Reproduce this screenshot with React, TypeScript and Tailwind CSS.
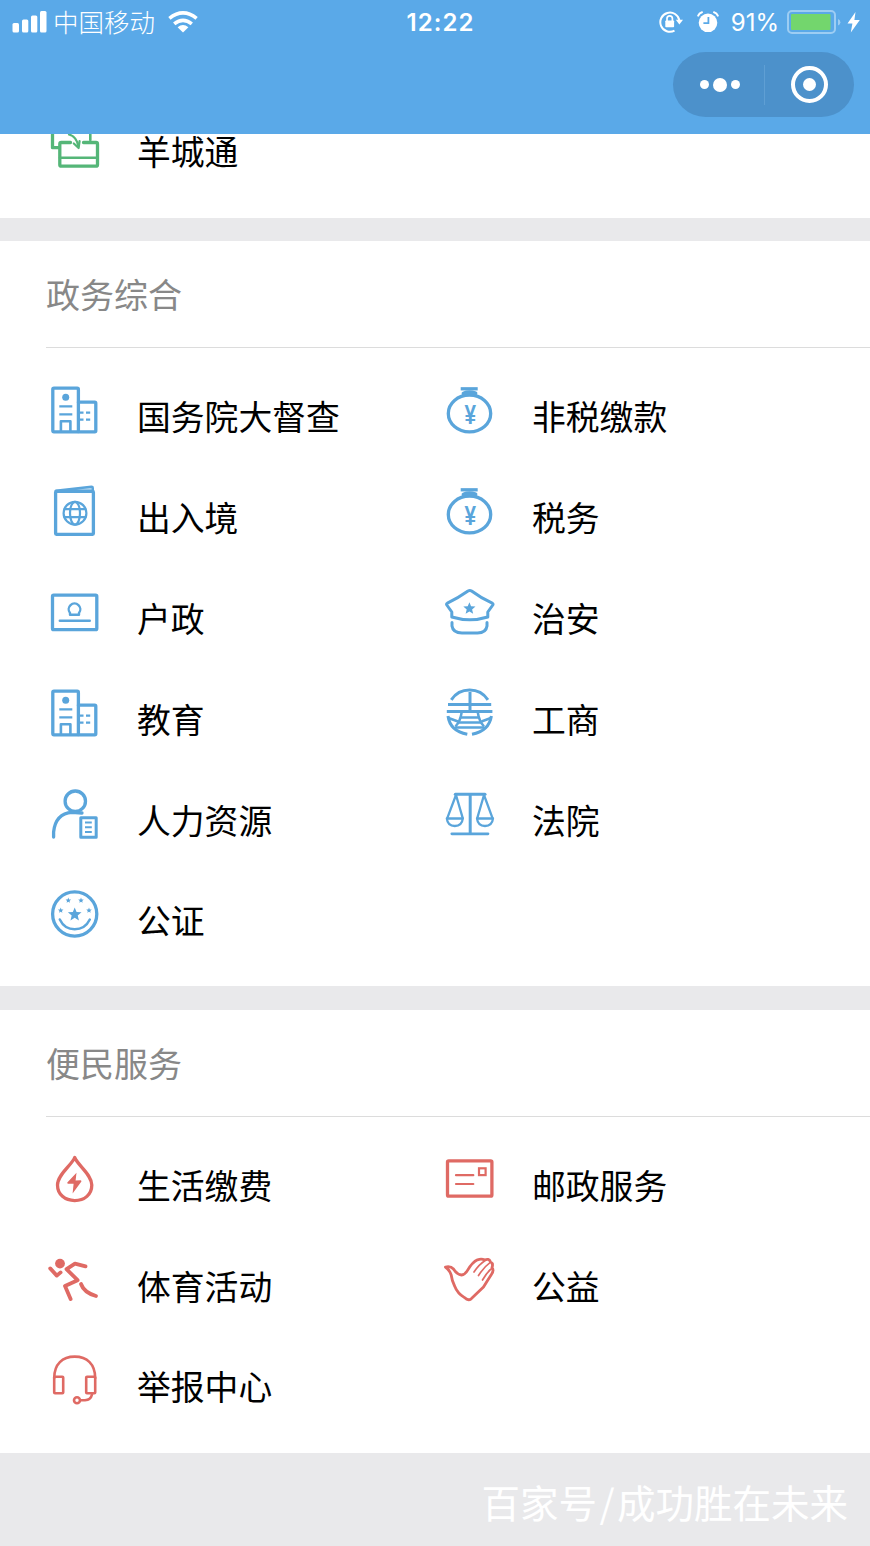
import type { ReactNode } from "react";

const STAR =
  "M0 -1 L0.26 -0.36 L0.95 -0.31 L0.42 0.14 L0.59 0.81 L0 0.44 L-0.59 0.81 L-0.42 0.14 L-0.95 -0.31 L-0.26 -0.36 Z";

function Star(props: { x: number; y: number; r: number }) {
  return (
    <path
      d={STAR}
      transform={`translate(${props.x} ${props.y}) scale(${props.r})`}
      fill="currentColor"
      stroke="none"
    />
  );
}

function Icon(props: { children: ReactNode }) {
  return (
    <svg
      viewBox="0 0 54 54"
      width={54}
      height={54}
      fill="none"
      stroke="currentColor"
      strokeWidth={3.3}
      strokeLinecap="round"
      strokeLinejoin="round"
      className="shrink-0"
    >
      {props.children}
    </svg>
  );
}

const CardIcon = () => (
  <Icon>
    <path d="M5.5 14 V28.7 H12.3" />
    <path d="M23.5 23.5 H14.3 Q12.8 23.5 12.8 25 V45.7 Q12.8 47.2 14.3 47.2 H49 Q50.5 47.2 50.5 45.7 V25 Q50.5 23.5 49 23.5 H36.5" />
    <path d="M13 38.7 H50" strokeWidth={2.6} />
    <path d="M43.3 14 V21" strokeWidth={2.6} />
    <path d="M22 15.5 Q29.5 17.5 31.3 27" strokeWidth={2.2} />
    <path d="M26.8 24.5 L31.6 29 L32.6 22" strokeWidth={2.2} />
  </Icon>
);

const BuildingIcon = () => (
  <Icon>
    <rect x={5.8} y={4.2} width={25.6} height={43.6} rx={1.2} />
    <path d="M31.4 18.2 H47.8 Q48.8 18.2 48.8 19.2 V46.8 Q48.8 47.8 47.8 47.8 H31.4" />
    <circle cx={18.7} cy={13.3} r={3.5} fill="currentColor" stroke="none" />
    <g strokeWidth={2.2} strokeLinecap="butt">
      <path d="M12.3 22.3 H25.3 M12.3 30.3 H25.3" />
      <path d="M13.9 47 V37.2 H23.4 V47" strokeWidth={2.6} />
      <path d="M33 28.7 H36.5 M39 28.7 H43.2 M33 35.7 H36.5 M39 35.7 H43.2" />
    </g>
  </Icon>
);

const PassportIcon = () => (
  <Icon>
    <rect x={8.6} y={6.4} width={37.8} height={43} rx={0.8} />
    <path
      d="M9 5.8 L44.5 1.8 Q45.8 1.8 45.8 3 V6 Z"
      strokeWidth={2.4}
      fill="currentColor"
      fillOpacity={0.35}
    />
    <g strokeWidth={2.2}>
      <circle cx={28} cy={28.2} r={11.4} />
      <ellipse cx={28} cy={28.2} rx={5} ry={11.4} />
      <path d="M17.5 24.2 H38.5 M17.5 32.2 H38.5" />
    </g>
  </Icon>
);

const MoneyBagIcon = () => (
  <Icon>
    <ellipse cx={27.5} cy={29.4} rx={21.2} ry={18.4} />
    <path d="M18.7 4.8 H35.7" strokeLinecap="butt" />
    <path d="M21.5 9.4 Q27.2 7 33.5 9.4" strokeWidth={3.8} />
    <text
      transform="translate(28.3 40.4) scale(0.74 1)"
      textAnchor="middle"
      fontSize={28}
      fontWeight={700}
      fontFamily="'Liberation Sans', sans-serif"
      fill="currentColor"
      stroke="none"
    >
      ¥
    </text>
  </Icon>
);

const IdCardIcon = () => (
  <Icon>
    <rect x={5.5} y={9.2} width={44.3} height={34.4} rx={1.2} />
    <path d="M12.8 34.8 H42.8" strokeWidth={2.4} />
    <path
      d="M23 28.8 H32 V27 A5.8 5.8 0 1 0 23 27 Z"
      strokeWidth={2.4}
    />
  </Icon>
);

const PoliceCapIcon = () => (
  <Icon>
    <path
      d="M26 5 Q27.8 4 29.6 5 Q39 12 50.2 17.2 Q51.4 18 50.8 19 L45.8 26 V31 Q28 36.5 9.8 31 V26 L4.8 19 Q4.2 18 5.4 17.2 Q16 12 26 5 Z"
      strokeWidth={3}
    />
    <Star x={27.4} y={22.6} r={6.4} />
    <path d="M10 36.5 V40 Q11 47 20 47 H35.5 Q44 47 45 40 V36.5" strokeWidth={3} />
  </Icon>
);

const CommerceIcon = () => (
  <Icon>
    <g strokeWidth={3} strokeLinecap="butt">
      <path d="M9.3 12.8 A22 22 0 0 1 45.9 12.8" />
      <path d="M28 5 V24" />
      <path d="M6 17.4 H49.2 M4.8 24.6 H50.4" />
      <path d="M6 29 Q8 44 25.3 47.3" />
      <path d="M49.4 29 Q47 44 30 47.3" />
      <g strokeWidth={2.5}>
        <path d="M19.7 25 Q18.5 34 13.5 39.5 M35.7 25 Q37 34 42 39.5" />
        <path d="M19 30.5 H37 M6.5 31 L16 34.5 M48.8 31 L39.5 34.5" />
        <path d="M16.5 35.6 H39 M13 40.4 H42.5" />
      </g>
    </g>
  </Icon>
);

const ScalesIcon = () => (
  <Icon>
    <path d="M13.3 6.2 H43" strokeWidth={3} />
    <path d="M28.2 6.2 V45" strokeLinecap="butt" strokeWidth={3} />
    <path d="M9.8 45.8 H46" strokeWidth={2.7} />
    <g strokeWidth={2.3}>
      <path d="M14 7 L5.2 30.4 M14 7 L20.8 30.4" />
      <path d="M4.8 30.5 H20.8 Q20 38 12.8 38 Q5.6 38 4.8 30.5 Z" />
      <path d="M42 7 L35.2 30.4 M42 7 L50.6 30.4" />
      <path d="M35 30.5 H51 Q50.2 38 43 38 Q35.8 38 35 30.5 Z" />
    </g>
  </Icon>
);

const StaffIcon = () => (
  <Icon>
    <circle cx={28.3} cy={13.2} r={10.2} />
    <path d="M6.6 49 V44 Q8.5 25.5 25 24.3 L35 25" />
    <rect x={33.8} y={29.8} width={15.4} height={19.4} strokeWidth={3} />
    <path
      d="M38 34.6 H44.8 M38 39.3 H44.8 M38 44 H44.8"
      strokeWidth={2}
      strokeLinecap="butt"
    />
  </Icon>
);

const NotaryIcon = () => (
  <Icon>
    <circle cx={27.7} cy={26} r={22.1} />
    <Star x={27.7} y={26.6} r={7.2} />
    <Star x={21.3} y={12.5} r={2.9} />
    <Star x={34} y={12.5} r={2.9} />
    <Star x={13.7} y={22.5} r={2.9} />
    <Star x={42} y={22.5} r={2.9} />
    <path d="M12.8 31.5 Q17.5 41.3 27.7 41.3 Q38 41.3 42.8 31.5" strokeWidth={2.5} />
  </Icon>
);

const UtilityIcon = () => (
  <Icon>
    <path d="M27.7 4.5 C31 12.5 44.8 21.5 44.8 32 C44.8 41.5 37.5 47.6 27.7 47.6 C18 47.6 10.5 41.5 10.5 32 C10.5 21.5 24.5 12.5 27.7 4.5 Z" />
    <path
      d="M29.5 19.8 L20.3 29.6 Q20 30.6 21 30.8 L26.6 30.8 L25.6 40.5 L34.4 28.4 Q34.6 27.4 33.6 27.2 L28.6 27.4 Z"
      fill="currentColor"
      stroke="none"
    />
  </Icon>
);

const MailIcon = () => (
  <Icon>
    <rect x={5.5} y={7.8} width={44.4} height={35.4} rx={1.2} />
    <path d="M14 22.2 H31.3 M14 31 H31.3" strokeWidth={2.2} />
    <rect x={37} y={15.3} width={6.6} height={6.8} strokeWidth={2.2} strokeLinejoin="miter" />
  </Icon>
);

const RunnerIcon = () => (
  <Icon>
    <circle cx={13} cy={9.6} r={4.9} fill="currentColor" stroke="none" />
    <g strokeWidth={3.8}>
      <path d="M3.2 14.4 L9.8 21.6 L13.6 18.4" />
      <path d="M38.5 12.4 L28 9.6 L19.5 15.2 L30.6 26.2 L18 32 L23.6 45" />
      <path d="M34 30 Q37 38.5 49 42" />
    </g>
  </Icon>
);

const HandIcon = () => (
  <Icon>
    <path
      d="M3.4 13 Q8.5 11.6 11.5 15 Q15 20.6 19.5 21 Q23 20.8 25.5 16.4 Q30.5 8 35.5 5.8 Q40 4.4 42.5 6.2 Q47 4 48.3 7.6 Q51.6 9.5 50 13.5 Q52.3 16.5 49.4 20.5 Q45.5 26.5 41.5 33 L29.2 44.8 Q26 47.2 22.5 43.6 Q15.5 39.5 12.6 32 Q10 27 9.2 21 Q7.5 16 3.4 13 Z"
      strokeWidth={2.8}
    />
    <path
      d="M42.5 7 Q37 10.5 32 18 M48.3 8.4 Q42 13 36.5 21.5 M49.8 14.5 Q45 18 40.5 26"
      strokeWidth={1.7}
    />
  </Icon>
);

const HeadsetIcon = () => (
  <Icon>
    <g strokeWidth={2.6}>
      <path d="M7.2 24 C7.2 10 15.5 2.6 27.7 2.6 C40 2.6 48.2 10 48.2 24" />
      <rect x={7.2} y={22.8} width={9} height={16.4} rx={0.8} />
      <rect x={39.2} y={22.8} width={9} height={16.4} rx={0.8} />
      <circle cx={30} cy={46.3} r={3} />
      <path d="M33.4 46.3 H38 Q43.8 45.8 45 40.5" />
    </g>
  </Icon>
);

type Service = { name: string; icon: () => ReactNode };

const government: Service[] = [
  { name: "国务院大督查", icon: BuildingIcon },
  { name: "非税缴款", icon: MoneyBagIcon },
  { name: "出入境", icon: PassportIcon },
  { name: "税务", icon: MoneyBagIcon },
  { name: "户政", icon: IdCardIcon },
  { name: "治安", icon: PoliceCapIcon },
  { name: "教育", icon: BuildingIcon },
  { name: "工商", icon: CommerceIcon },
  { name: "人力资源", icon: StaffIcon },
  { name: "法院", icon: ScalesIcon },
  { name: "公证", icon: NotaryIcon },
];

const convenience: Service[] = [
  { name: "生活缴费", icon: UtilityIcon },
  { name: "邮政服务", icon: MailIcon },
  { name: "体育活动", icon: RunnerIcon },
  { name: "公益", icon: HandIcon },
  { name: "举报中心", icon: HeadsetIcon },
];

function ServiceItem(props: { service: Service }) {
  const ServiceIcon = props.service.icon;
  return (
    <div className="flex h-[54px] items-start gap-9">
      <ServiceIcon />
      <span className="mt-[15px] text-[33.8px] leading-[34px] whitespace-nowrap text-black">
        {props.service.name}
      </span>
    </div>
  );
}

type SectionProps = {
  title: string;
  services: Service[];
  iconColor: string;
};

function Section(props: SectionProps) {
  return (
    <section className="bg-white pb-11 last:pb-[44.6px]">
      <h2 className="ml-[46px] h-[107px] border-b border-[#dcdcdc] text-[34px] leading-[105px] text-[#888888]">
        {props.title}
      </h2>
      <div
        className={`grid grid-cols-[395px_1fr] gap-y-[46.8px] pt-9 pl-[47px] ${props.iconColor}`}
      >
        {props.services.map((service) => (
          <ServiceItem key={service.name} service={service} />
        ))}
      </div>
    </section>
  );
}

function StatusBar() {
  return (
    <div className="grid h-[44px] grid-cols-[1fr_auto_1fr] items-center pr-[7px] pl-3 text-white">
      <div className="flex items-center">
        <svg width={35} height={22} viewBox="0 0 35 22" fill="currentColor">
          <rect x={0.5} y={12} width={6.5} height={9.5} rx={1.5} />
          <rect x={10} y={8.5} width={6.3} height={13} rx={1.5} />
          <rect x={19} y={4.5} width={6.3} height={17} rx={1.5} />
          <rect x={28} y={0} width={6.5} height={21.5} rx={1.5} />
        </svg>
        <span className="mb-0.5 ml-1.5 text-[25.5px] leading-[42px] font-light">中国移动</span>
        <svg width={30} height={22} viewBox="0 0 30 22" className="ml-[13px]">
          <g fill="none" stroke="currentColor" strokeWidth={3.6}>
            <path d="M1.4 7.4 Q15 -3.6 28.6 7.4" />
            <path d="M6.2 12.8 Q15 5.8 23.8 12.8" />
          </g>
          <path d="M9.6 16.2 Q15 11.6 20.4 16.2 L15 21.4 Z" fill="currentColor" />
        </svg>
      </div>
      <span className="pt-0.5 pl-1.5 font-[Inter] text-[24px] leading-[42px] font-semibold tracking-[1.1px]">
        12:22
      </span>
      <div className="flex items-center justify-end">
        <svg width={24} height={22} viewBox="0 0 24 22">
          <g fill="none" stroke="currentColor" strokeWidth={2}>
            <path d="M15.5 19.6 A9.6 9.6 0 1 1 20.4 9.5" />
            <path d="M8 10 V7.6 A2.7 2.7 0 0 1 13.4 7.6 V10" strokeWidth={1.7} />
          </g>
          <rect x={6.3} y={9.4} width={8.8} height={6.8} rx={0.8} fill="currentColor" />
          <path d="M16.8 8.8 H24 L20.4 13.6 Z" fill="currentColor" />
        </svg>
        <svg width={22} height={22} viewBox="0 0 22 22" className="ml-3.5">
          <circle cx={11} cy={11.8} r={9.3} fill="currentColor" />
          <path
            d="M1.2 4.6 Q2.2 2 5 1.2 M20.8 4.6 Q19.8 2 17 1.2"
            fill="none"
            stroke="currentColor"
            strokeWidth={2}
            strokeLinecap="round"
          />
          <path d="M11.4 6 V12.2 H6.4" fill="none" stroke="#5aa9e8" strokeWidth={1.8} />
        </svg>
        <span className="ml-3 pt-0.5 font-[Inter] text-[24px] leading-[42px]">91%</span>
        <svg width={76} height={24} viewBox="0 0 76 24" className="ml-2">
          <rect
            x={1}
            y={1}
            width={47}
            height={22}
            rx={4}
            fill="none"
            stroke="#9dcdf3"
            strokeWidth={2}
          />
          <rect x={4} y={4} width={39.5} height={16} rx={1} fill="#73d66d" />
          <path d="M51 9 Q53.4 10 53.4 12.2 Q53.4 14.4 51 15.4 Z" fill="#9dcdf3" />
          <path d="M68.5 2 L60.5 13.5 H65.4 L63.8 22.5 L72.8 10 H67.4 Z" fill="currentColor" />
        </svg>
      </div>
    </div>
  );
}

function Capsule() {
  return (
    <div className="mt-2 mr-4 ml-auto flex h-[65px] w-[181px] items-center rounded-full bg-[#4c91cb] text-white">
      <div className="flex w-[91px] items-center justify-center gap-1 pl-[3px]">
        <span className="size-[9px] rounded-full bg-white" />
        <span className="size-[14px] rounded-full bg-white" />
        <span className="size-[9px] rounded-full bg-white" />
      </div>
      <span className="h-10 w-px bg-[#5f9fd4]" />
      <div className="flex flex-1 justify-center">
        <span className="flex size-[37px] items-center justify-center rounded-full border-4 border-white">
          <span className="size-[13px] rounded-full bg-white" />
        </span>
      </div>
    </div>
  );
}

export default function App() {
  return (
    <div className="flex h-[1546px] w-[870px] flex-col overflow-hidden bg-[#e9e9eb] font-['Noto_Sans_CJK_SC',sans-serif]">
      <header className="h-[134px] shrink-0 bg-[#5aa9e8]">
        <StatusBar />
        <Capsule />
      </header>
      <main className="flex flex-col gap-[23.4px]">
        <section className="h-[84px] overflow-hidden bg-white pl-[47px] text-[#55b678]">
          <div className="-mt-[15px]">
            <ServiceItem service={{ name: "羊城通", icon: CardIcon }} />
          </div>
        </section>
        <Section title="政务综合" services={government} iconColor="text-[#5aa5db]" />
        <Section title="便民服务" services={convenience} iconColor="text-[#df6a64]" />
      </main>
      <footer className="flex flex-1 items-center justify-end pt-1 pr-[22px] text-[38.5px] leading-none text-white">
        <span>百家号</span>
        <span className="px-[2.5px]">/</span>
        <span>成功胜在未来</span>
      </footer>
    </div>
  );
}
